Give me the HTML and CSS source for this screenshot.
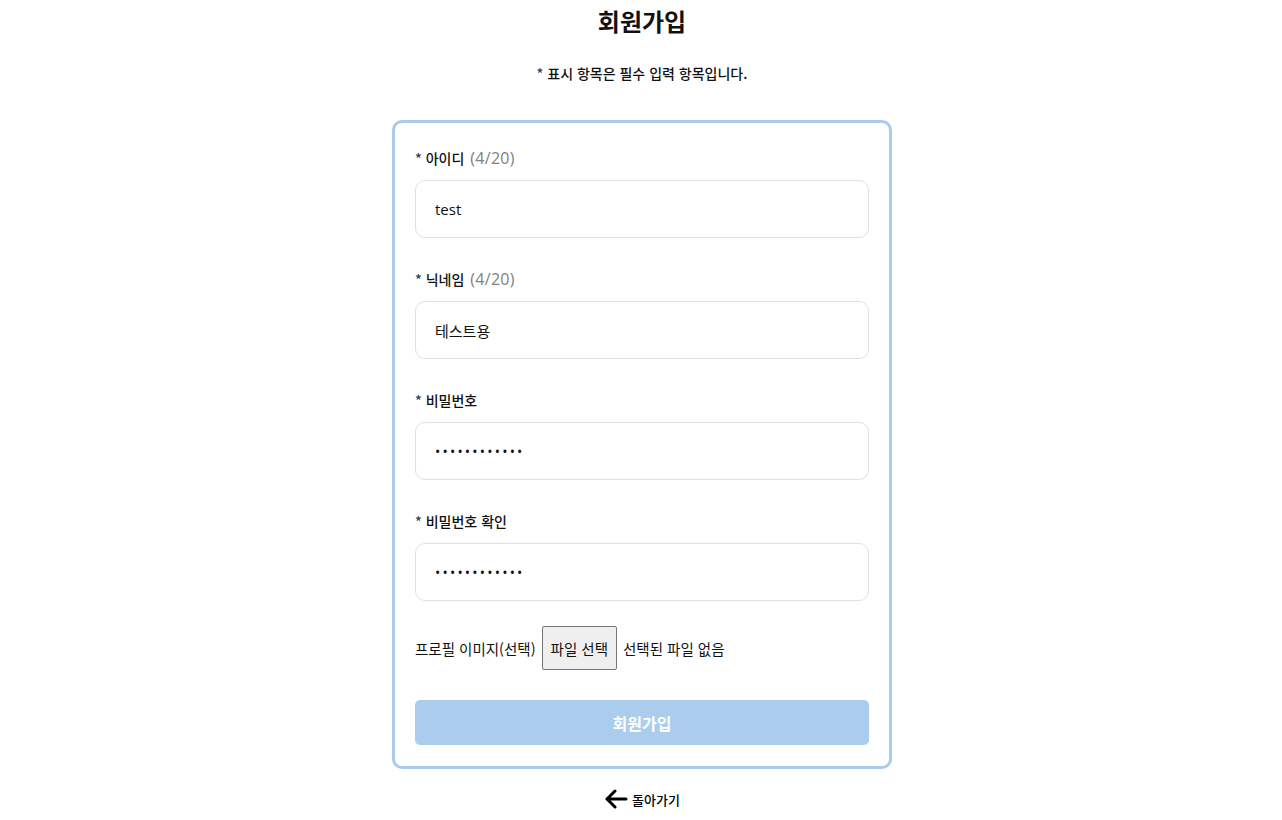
FILE: index.html
```html
<!DOCTYPE html>
<html lang="ko">
<head>
<meta charset="utf-8">
<title>회원가입</title>
<link rel="stylesheet" href="styles.css">
</head>
<body>
<main class="page">
  <h1 class="title">회원가입</h1>
  <p class="notice"><span class="star">*</span> 표시 항목은 필수 입력 항목입니다.</p>
  <form class="card">
    <div class="field">
      <label class="label"><span class="star">*</span> 아이디 <span class="count">(4/20)</span></label>
      <input class="input" type="text" value="test">
    </div>
    <div class="field">
      <label class="label"><span class="star">*</span> 닉네임 <span class="count">(4/20)</span></label>
      <input class="input" type="text" value="테스트용">
    </div>
    <div class="field">
      <label class="label"><span class="star">*</span> 비밀번호</label>
      <input class="input" type="password" value="123456789012">
    </div>
    <div class="field">
      <label class="label"><span class="star">*</span> 비밀번호 확인</label>
      <input class="input" type="password" value="123456789012">
    </div>
    <div class="file-row">
      <span class="file-label">프로필 이미지(선택)</span>
      <button type="button" class="file-btn">파일 선택</button>
      <span class="file-name">선택된 파일 없음</span>
    </div>
    <button type="button" class="submit">회원가입</button>
  </form>
  <a class="back" href="#">
    <svg class="arrow" width="24" height="20" viewBox="0 0 24 20"><path d="M22 10H3M11 2L3 10l8 8" fill="none" stroke="#000" stroke-width="3" stroke-linecap="round" stroke-linejoin="round"/></svg>
    <span>돌아가기</span>
  </a>
</main>
</body>
</html>
```
FILE: styles.css
```css
* { box-sizing: border-box; }
html, body { margin: 0; padding: 0; background: #fff; }
body {
  font-family: "Noto Sans CJK KR", "Noto Sans", sans-serif;
  color: #111;
}
.page {
  display: flex;
  flex-direction: column;
  align-items: center;
  padding-left: 2px;
}
.title {
  margin: 4px 0 0;
  font-size: 24px;
  line-height: 34px;
  font-weight: 700;
}
.notice {
  margin: 24px 0 0;
  font-size: 14px;
  line-height: 22px;
  font-weight: 500;
}
.star { color: #2c3e60; }
.card {
  margin-top: 36px;
  width: 500px;
  border: 3px solid #aacbee;
  border-radius: 10px;
  padding: 25px 20px 21px;
  display: flex;
  flex-direction: column;
}
.field {
  display: flex;
  flex-direction: column;
  gap: 12px;
  margin-bottom: 31px;
}
.label {
  font-size: 14px;
  line-height: 20px;
  font-weight: 500;
}
.count {
  margin-left: 2px;
  font-family: "Open Sans", "Inter", sans-serif;
  color: #808080;
  font-size: 16px;
  font-weight: 500;
  letter-spacing: 0.3px;
}
.input {
  height: 58px;
  width: 100%;
  border: 1px solid #e0e0e0;
  border-radius: 10px;
  padding: 0 19px;
  font-family: "Open Sans", "Noto Sans CJK KR", sans-serif;
  font-size: 15px;
  color: #111;
  outline: none;
  background: #fff;
}
.input[type="password"] { letter-spacing: 2.2px; font-size: 14px; }
.file-row {
  margin-top: -6px;
  display: flex;
  align-items: center;
  gap: 6px;
  font-size: 14.5px;
}
.file-btn {
  height: 44px;
  padding: 0 8px;
  background: #efefef;
  border: 1px solid #767676;
  border-radius: 2px;
  font-family: "Noto Sans CJK KR", sans-serif;
  font-size: 14.5px;
  color: #111;
}
.submit {
  margin-top: 30px;
  height: 45px;
  width: 100%;
  border: none;
  border-radius: 5px;
  background: #aacdee;
  color: #fff;
  font-family: "Noto Sans CJK KR", sans-serif;
  font-size: 16px;
  font-weight: 700;
}
.back {
  margin-top: 20px;
  display: flex;
  align-items: center;
  gap: 4px;
  color: #000;
  text-decoration: none;
  font-size: 13px;
  font-weight: 500;
}
.arrow { display: block; }
```
